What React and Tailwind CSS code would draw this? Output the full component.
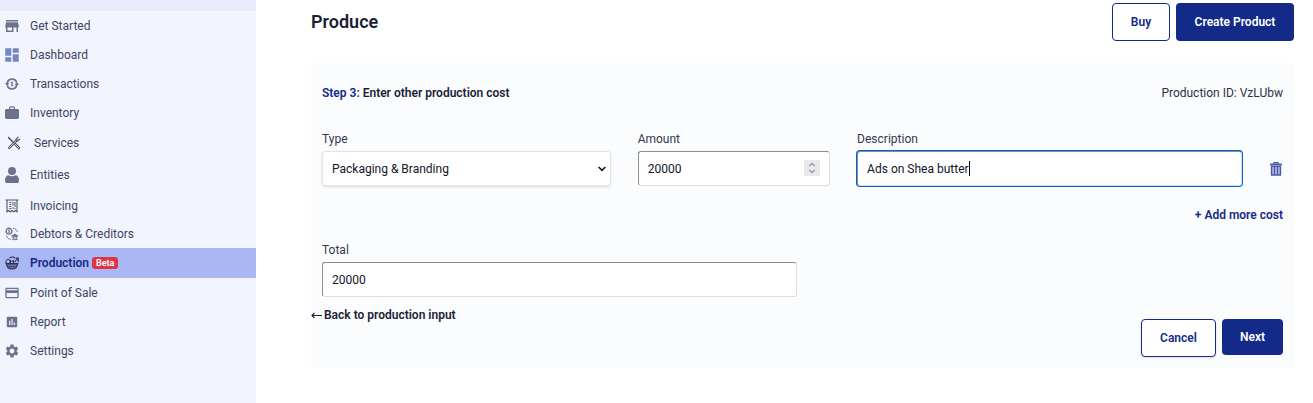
import { useState } from "react";
import { MdAssessment, MdDashboard, MdPayment, MdSettings, MdStore } from "react-icons/md";

function TransactionsIcon({ className }) {
  return (
    <svg viewBox="0 0 14 14" className={className} fill="none" stroke="currentColor" strokeWidth="1.8">
      <path d="M2.2 6.2a4.900 4.900 0 0 1 9.500-.6M11.800 7.800a4.900 4.900 0 0 1-9.500.6" />
      <path d="M0 6h4.400L2.200 9zM9.600 8H14l-2.200-3z" fill="currentColor" stroke="none" />
      <path d="M7 4.400v5.200M5.800 5.600h2M6.200 8.400h2" strokeWidth="1.100" />
    </svg>
  );
}

function InventoryIcon({ className }) {
  return (
    <svg viewBox="0 0 14 14" className={className} fill="currentColor">
      <rect x="0" y="3" width="14" height="10" rx="1.400" />
      <path d="M4.600 3.600V2c0-.8.4-1.200 1.200-1.200h2.400c.8 0 1.200.4 1.200 1.200v1.600" fill="none" stroke="currentColor" strokeWidth="1.300" />
    </svg>
  );
}

function ServicesIcon({ className }) {
  return (
    <svg viewBox="0 0 14 14" className={className} fill="none" stroke="currentColor" strokeLinecap="round">
      <path d="M1.600 1.600l4.600 4.600" strokeWidth="1.500" />
      <path d="M8.400 8.400l3.600 3.600" strokeWidth="2.600" />
      <path d="M8.400 8.400l3.600 3.600" stroke="#f3f6fe" strokeWidth=".8" />
      <path d="M2.200 11.800l7.400-7.400" strokeWidth="2.400" />
      <path d="M2.200 11.800l7.400-7.400" stroke="#f3f6fe" strokeWidth=".7" />
      <path d="M11 1.200a2.200 2.200 0 0 0-1.600 3.400 2.200 2.200 0 0 0 3.400-1.600l-1.400.8-1-.9z" strokeWidth="1" />
    </svg>
  );
}

function EntitiesIcon({ className }) {
  return (
    <svg viewBox="0 0 14 16" className={className} fill="currentColor">
      <circle cx="7" cy="4" r="4" />
      <path d="M3.400 8.200c2.200 1.400 5 1.400 7.200 0C13 8.600 14 10.600 14 13.400c0 1.700-.8 2.600-2.200 2.600H2.200C.8 16 0 15.100 0 13.400c0-2.800 1-4.800 3.400-5.200z" />
    </svg>
  );
}

function InvoicingIcon({ className }) {
  return (
    <svg viewBox="0 0 14 14" className={className} fill="none" stroke="currentColor">
      <path d="M.5 1h13M2 1v11.800l1.700-1.300 1.700 1.300L7 11.500l1.700 1.300 1.700-1.300 1.600 1.300V1" strokeWidth="1.100" />
      <path d="M4.300 3.500h2M4.300 5.500h2M4.300 7.500h2M4.300 9.500h2" strokeWidth="1" />
      <path d="M8 3v3.500M8 8v2M10 3v5M10 9v1" strokeWidth="1" />
    </svg>
  );
}

function DebtorsIcon({ className }) {
  return (
    <svg viewBox="0 0 14 14" className={className} fill="none" stroke="currentColor">
      <circle cx="4" cy="4.200" r="2.900" strokeWidth="1.400" />
      <path d="M4.800 3H3.500v1.200h1.200v1.200H3.200" strokeWidth=".9" />
      <path d="M8 1.200c2.500.2 4 1.600 4.200 3.800M1.600 8.600c.4 2.400 1.800 3.600 4.200 3.800" strokeWidth=".9" />
      <path d="M6.600 9.200L9.800 7l3.200 2.200zM7.200 12.600h5.400" fill="currentColor" strokeWidth=".9" />
      <path d="M8.200 9v3.200M9.900 9v3.200M11.600 9v3.200" strokeWidth=".9" />
    </svg>
  );
}

function ProductionIcon({ className }) {
  return (
    <svg viewBox="0 0 14 14" className={className} fill="none" stroke="currentColor">
      <path d="M1.500 8h11c-.3 3-2.400 5-5.500 5s-5.200-2-5.500-5z" fill="currentColor" fillOpacity=".45" strokeWidth="1.200" />
      <path d="M3.600 10.600h6.800" strokeWidth="1.100" strokeDasharray="1.500 .7" />
      <path d="M1 7.200V4.600l2-1.500 2 1.500v2.400M5.500 7V4.300L7 5.500l1.500-1.200V7M.5 7.500h13" strokeWidth="1" />
      <path d="M4.500 2.200C6 .8 8.500.8 10 2.200M9.500 5.800l3.500-3.500M10.500 2h2.700v4" strokeWidth="1.100" />
    </svg>
  );
}

function TrashIcon({ className }) {
  return (
    <svg viewBox="0 0 12 14" className={className} fill="none">
      <path d="M4 2V.7h4V2" stroke="#4a5aa9" strokeWidth="1.200" />
      <rect x="0" y="1.600" width="12" height="2" rx=".4" fill="#4a5aa9" />
      <path d="M1.500 4.400h9V13h-9z" fill="#a6aed8" stroke="#4a5aa9" strokeWidth="1.300" />
      <path d="M4.500 5v7.500M7.500 5v7.500" stroke="#4a5aa9" strokeWidth="1.100" />
    </svg>
  );
}

const menu = [
  { name: "Get Started", icon: MdStore, row: "h-[29px]", iconClass: "size-[18px] -mx-0.5 text-[#6d728c]" },
  { name: "Dashboard", icon: MdDashboard, row: "h-[29px]", iconClass: "size-[18px] -mx-0.5 text-[#7486c4]" },
  { name: "Transactions", icon: TransactionsIcon, row: "h-[29px]", iconClass: "size-3.5 text-[#6d728c]" },
  { name: "Inventory", icon: InventoryIcon, row: "h-[29px]", iconClass: "size-3.5 text-[#6d728c]" },
  { name: "Services", icon: ServicesIcon, row: "h-8 pl-[7px]", iconClass: "size-3.5 mr-0.5 text-[#55565c]" },
  { name: "Entities", icon: EntitiesIcon, row: "h-8", iconClass: "w-3.5 h-4 text-[#6d728c]" },
  { name: "Invoicing", icon: InvoicingIcon, row: "h-[29px]", iconClass: "size-3.5 text-[#55565c]" },
  { name: "Debtors & Creditors", icon: DebtorsIcon, row: "h-7", iconClass: "size-3.5 text-[#6d728c]" },
  { name: "Production", icon: ProductionIcon, row: "h-[30px]", iconClass: "size-3.5 text-[#2b3050]", active: true, badge: "Beta" },
  { name: "Point of Sale", icon: MdPayment, row: "h-[29px]", iconClass: "size-4 -mx-px text-[#6d728c]" },
  { name: "Report", icon: MdAssessment, row: "h-[29px]", iconClass: "size-3.5 text-[#6d728c]" },
  { name: "Settings", icon: MdSettings, row: "h-[29px]", iconClass: "size-4 -mx-px text-[#6d728c]" },
];

const fieldClass =
  "w-full h-[35px] px-[9px] bg-white text-xs text-[#101426] rounded-[3px] border border-t-[#8c8c8c] border-l-[#8c8c8c] border-r-[#dedede] border-b-[#dedede] outline-none";
const labelClass = "block mb-[3px] text-xs leading-[18px] text-[#33384f]";
const outlineButton =
  "h-[38px] rounded-[4px] border border-[#132a88] bg-white text-xs font-semibold text-[#132a88]";
const solidButton = "rounded-[4px] bg-[#132a88] text-xs font-semibold text-white";

function Sidebar() {
  return (
    <aside className="w-64 shrink-0 bg-[#f2f5fe]">
      <div className="h-[11px] bg-[#e8ebfb]" />
      <nav>
        {menu.map((item) => (
          <a
            key={item.name}
            href="#"
            className={`flex items-center gap-[11px] pl-[5px] text-xs ${item.row} ${
              item.active ? "bg-[#a9b7f3] font-semibold text-[#132a88]" : "text-[#3f4464]"
            }`}
          >
            <item.icon className={`shrink-0 ${item.iconClass}`} />
            <span className="flex items-center gap-[3px]">
              {item.name}
              {item.badge && (
                <span className="h-3 px-1 rounded-[3px] bg-[#dc3545] text-[9px] leading-3 font-semibold text-white">
                  {item.badge}
                </span>
              )}
            </span>
          </a>
        ))}
      </nav>
    </aside>
  );
}

function CostRow() {
  const [type, setType] = useState("Packaging & Branding");
  const [amount, setAmount] = useState("20000");
  const [description, setDescription] = useState("Ads on Shea butter");

  return (
    <div className="mt-[27px] grid grid-cols-[3fr_2fr_4fr_14px] gap-[27px]">
      <div>
        <label htmlFor="type" className={labelClass}>Type</label>
        <div className="relative">
          <select
            id="type"
            value={type}
            onChange={(e) => setType(e.target.value)}
            className="w-full h-[35px] px-[9px] appearance-none bg-white text-xs text-[#101426] rounded-[3px] border border-[#e1e5ea] shadow-sm outline-none"
          >
            <option>Packaging &amp; Branding</option>
            <option>Labour</option>
            <option>Transportation</option>
          </select>
          <svg viewBox="0 0 8 6" className="absolute right-[5px] top-[15px] w-2 h-1.5 pointer-events-none" fill="none" stroke="#111" strokeWidth="1.500">
            <path d="M.6 1L4 4.400 7.400 1" />
          </svg>
        </div>
      </div>
      <div>
        <label htmlFor="amount" className={labelClass}>Amount</label>
        <div className="relative">
          <input
            id="amount"
            type="number"
            value={amount}
            onChange={(e) => setAmount(e.target.value)}
            className={`${fieldClass} [appearance:textfield] [&::-webkit-inner-spin-button]:appearance-none`}
          />
          <span className="absolute right-[10px] top-[9px] flex size-4 items-center justify-center bg-[#e9e9ed]">
            <svg viewBox="0 0 8 12" className="w-2 h-3" fill="none" stroke="#8f8f9d" strokeWidth="1.200">
              <path d="M1.300 4L4 1.300 6.700 4M1.300 8L4 10.700 6.700 8" />
            </svg>
          </span>
        </div>
      </div>
      <div>
        <label htmlFor="description" className={labelClass}>Description</label>
        <div className="relative">
          <input
            id="description"
            type="text"
            value={description}
            onChange={(e) => setDescription(e.target.value)}
            className={`${fieldClass} ring-1 ring-[#0060df]`}
          />
          <span className="absolute left-28 top-[10px] h-[15px] w-px bg-black" />
        </div>
      </div>
      <button type="button" aria-label="Remove cost" className="mt-8 self-start flex w-3.5 justify-center">
        <TrashIcon className="w-3 h-3.5" />
      </button>
    </div>
  );
}

function App() {
  return (
    <div className="flex min-h-screen bg-white font-['Roboto',sans-serif] text-xs">
      <Sidebar />
      <main className="flex-1 pt-[3px] pl-[55px] pr-[19px]">
        <header className="flex items-center justify-between">
          <h1 className="text-lg font-semibold text-[#1a1f36]">Produce</h1>
          <div className="flex gap-1.5">
            <button type="button" className={`${outlineButton} w-[58px]`}>Buy</button>
            <button type="button" className={`${solidButton} h-[38px] w-[118px]`}>Create Product</button>
          </div>
        </header>

        <form className="mt-[22px] bg-[#fbfcfe] pt-5 pb-[11px]" onSubmit={(e) => e.preventDefault()}>
          <div className="px-[11px]">
            <div className="flex items-center justify-between leading-5">
              <h2 className="font-semibold text-[#1a1f36]">
                <span className="text-[#132a88]">Step 3:</span> Enter other production cost
              </h2>
              <p className="text-[#2b3048]">Production ID: VzLUbw</p>
            </div>

            <CostRow />

            <div className="mt-[19px] flex justify-end">
              <button type="button" className="leading-5 font-semibold text-[#132a88]">+ Add more cost</button>
            </div>

            <div className="mt-4 grid grid-cols-2 gap-[11px]">
              <div>
                <label htmlFor="total" className={labelClass}>Total</label>
                <input id="total" type="text" defaultValue="20000" className={fieldClass} />
              </div>
            </div>
          </div>

          <div className="mt-2 flex items-start justify-between pr-[11px]">
            <a href="#" className="flex items-center gap-0.5 leading-5 font-semibold text-[#1a1f36]">
              <svg viewBox="0 0 11 8" className="w-[11px] h-2" fill="none" stroke="currentColor" strokeWidth="1.100">
                <path d="M11 4.500H1M3.400 2L1 4.500 3.400 7" />
              </svg>
              Back to production input
            </a>
            <div className="mt-3.5 flex items-start gap-1.5">
              <button type="button" className={`${outlineButton} w-[75px] shadow-sm`}>Cancel</button>
              <button type="submit" className={`${solidButton} h-9 w-[61px]`}>Next</button>
            </div>
          </div>
        </form>
      </main>
    </div>
  );
}

export default App;
